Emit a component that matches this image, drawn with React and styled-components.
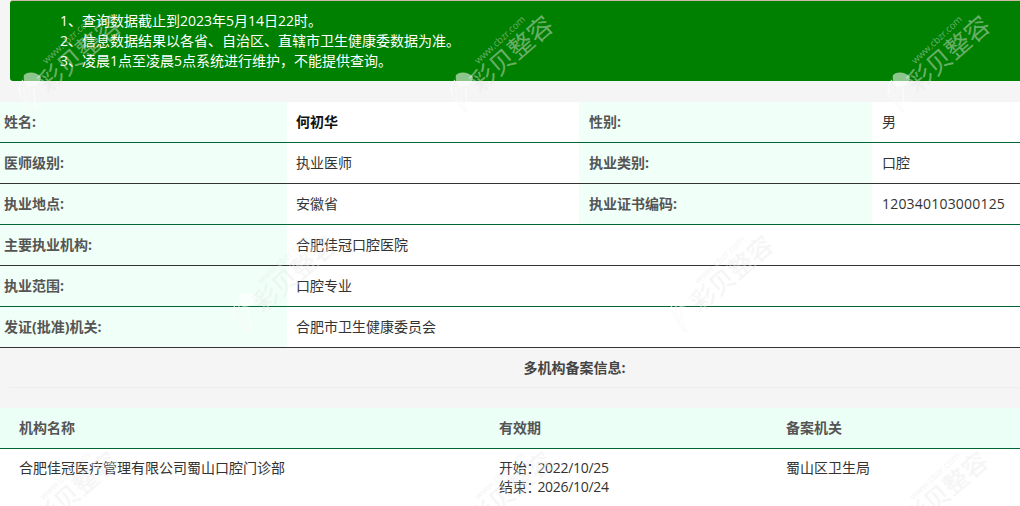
import React from "react";
import styled, { createGlobalStyle } from "styled-components";

const FONT = `"Open Sans", "Noto Sans CJK SC", sans-serif`;

const rows = [
  { cells: ["姓名:", "何初华", "性别:", "男"], strong: true, line: "#006633" },
  { cells: ["医师级别:", "执业医师", "执业类别:", "口腔"], line: "#333333" },
  { cells: ["执业地点:", "安徽省", "执业证书编码:", "120340103000125"], line: "#006633" },
  { cells: ["主要执业机构:", "合肥佳冠口腔医院"], line: "#333333" },
  { cells: ["执业范围:", "口腔专业"], line: "#006633" },
  { cells: ["发证(批准)机关:", "合肥市卫生健康委员会"], line: "#333333" },
];

// watermark tiles sit over the page like a background picture
const marks = [
  [18, 15], [450, 15], [887, 15],
  [233, 235], [670, 235],
  [15, 451], [450, 451], [885, 451],
];

const GlobalStyle = createGlobalStyle`
  html, body {
    margin: 0;
    padding: 0;
    background: #f5f5f5;
    overflow: hidden;
  }
  body {
    font-family: ${FONT};
    font-size: 14px;
    color: #333;
  }
`;

const Page = styled.div`
  position: relative;
  width: 1020px;
  height: 506px;
  overflow: hidden;
`;

const Notice = styled.div`
  margin-left: 10px;
  height: 81px;
  box-sizing: border-box;
  padding: 10px 0 0 50px;
  background: #008000;
  border-top: 1px solid #cfb8a8;
  border-radius: 3px 0 0 3px;
  color: #fff;
  line-height: 20px;
`;

const InfoTable = styled.div`
  margin-top: 21px;
  background: #fff;
`;

const Row = styled.div`
  display: grid;
  grid-template-columns: 287px 292px 293px 148px;
  height: 41px;
  box-sizing: border-box;
  border-bottom: 1px solid ${(p) => p.$line};
`;

const Label = styled.div`
  display: flex;
  align-items: center;
  padding: 0 0 2px ${(p) => p.$pad}px;
  background: #f0fff8;
  color: #555;
  font-weight: 700;
`;

const Value = styled.div`
  display: flex;
  align-items: center;
  padding: 0 0 2px ${(p) => p.$pad}px;
  color: ${(p) => (p.$strong ? "#111" : "#333")};
  font-weight: ${(p) => (p.$strong ? 700 : 400)};
  letter-spacing: ${(p) => (p.$code ? "0.2px" : "0")};
  white-space: nowrap;
`;

const SectionTitle = styled.div`
  height: 40px;
  margin-left: 9px;
  padding: 0 0 2px 120px;
  box-sizing: border-box;
  border-bottom: 1px solid #eeeeee;
  display: flex;
  align-items: center;
  justify-content: center;
  font-weight: 700;
  color: #444;
`;

const FilingTable = styled.div`
  margin-top: 20px;
`;

const FilingRow = styled.div`
  display: grid;
  grid-template-columns: 480px 287px 1fr;
  padding: ${(p) => (p.$head ? "10px" : "9px")} 0 0 19px;
  background: ${(p) => (p.$head ? "#ecfff7" : "#fff")};
  color: ${(p) => (p.$head ? "#555" : "#333")};
  font-weight: ${(p) => (p.$head ? 700 : 400)};
  line-height: 19px;
  height: ${(p) => (p.$head ? "41px" : "58px")};
  box-sizing: border-box;
  border-bottom: ${(p) => (p.$head ? "1px solid #006633" : "none")};
`;

const Period = styled.div`
  letter-spacing: -0.3px;
`;

const Colon = styled.span`
  letter-spacing: -3px;
`;

const Watermark = styled.div`
  position: absolute;
  left: ${(p) => p.$x}px;
  top: ${(p) => p.$y}px;
  width: 104px;
  height: 100px;
  pointer-events: none;
  color: rgba(255, 255, 255, 0.42);
  text-shadow: 0 0 1px rgba(0, 0, 0, 0.07);
`;

const MarkUrl = styled.div`
  position: absolute;
  left: 50px;
  top: 25px;
  transform: translate(-50%, -50%) rotate(-43deg);
  font-size: 9.5px;
  line-height: 10px;
  white-space: nowrap;
`;

const MarkName = styled.div`
  position: absolute;
  left: 61px;
  top: 38px;
  transform: translate(-50%, -50%) rotate(-41deg);
  font-size: 25px;
  line-height: 26px;
  white-space: nowrap;
`;

const MarkLogo = styled.svg`
  position: absolute;
  left: 0;
  top: 57px;
  width: 24px;
  height: 42px;
`;

const Mark = ({ x, y }) => (
  <Watermark $x={x} $y={y}>
    <MarkUrl>www.cbzr.com</MarkUrl>
    <MarkName>彩贝整容</MarkName>
    <MarkLogo viewBox="0 0 24 42" fill="none" stroke="rgba(255,255,255,0.75)">
      <path d="M6 3c4-4 13-3 17 2-1 7-6 10-13 10C7 13 5 8 6 3z" fill="rgba(255,255,255,0.55)" stroke="none" />
      <path d="M5 8C1 12 0 18 2 22M2 15c0 8 5 17 13 25M6 14c-1 8 3 18 10 26M11 15c-1 8 1 17 6 25M16 16c0 7 0 15 3 21" strokeWidth="1.2" />
      <path d="M2 15c0 8 5 17 13 25M6 14c-1 8 3 18 10 26M11 15c-1 8 1 17 6 25" stroke="rgba(0,0,0,0.05)" strokeWidth="0.6" />
    </MarkLogo>
  </Watermark>
);

export default function App() {
  return (
    <Page>
      <GlobalStyle />
      <Notice>
        <div>1、查询数据截止到2023年5月14日22时。</div>
        <div>2、信息数据结果以各省、自治区、直辖市卫生健康委数据为准。</div>
        <div>{"3、凌晨1点至凌晨5点系统进行维护\uFF0C不能提供查询。"}</div>
      </Notice>
      <InfoTable>
        {rows.map((row) => (
          <Row key={row.cells[0]} $line={row.line}>
            <Label $pad={4}>{row.cells[0]}</Label>
            <Value $pad={9} $strong={row.strong}>{row.cells[1]}</Value>
            {row.cells[2] ? (
              <>
                <Label $pad={10}>{row.cells[2]}</Label>
                <Value $pad={10} $code={row.cells[3].length > 10}>{row.cells[3]}</Value>
              </>
            ) : null}
          </Row>
        ))}
      </InfoTable>
      <SectionTitle>多机构备案信息:</SectionTitle>
      <FilingTable>
        <FilingRow $head>
          <div>机构名称</div>
          <div>有效期</div>
          <div>备案机关</div>
        </FilingRow>
        <FilingRow>
          <div>合肥佳冠医疗管理有限公司蜀山口腔门诊部</div>
          <Period>
            开始<Colon>{"\uFF1A"}</Colon>2022/10/25
            <br />
            结束<Colon>{"\uFF1A"}</Colon>2026/10/24
          </Period>
          <div>蜀山区卫生局</div>
        </FilingRow>
      </FilingTable>
      {marks.map(([x, y]) => (
        <Mark key={`${x}-${y}`} x={x} y={y} />
      ))}
    </Page>
  );
}
